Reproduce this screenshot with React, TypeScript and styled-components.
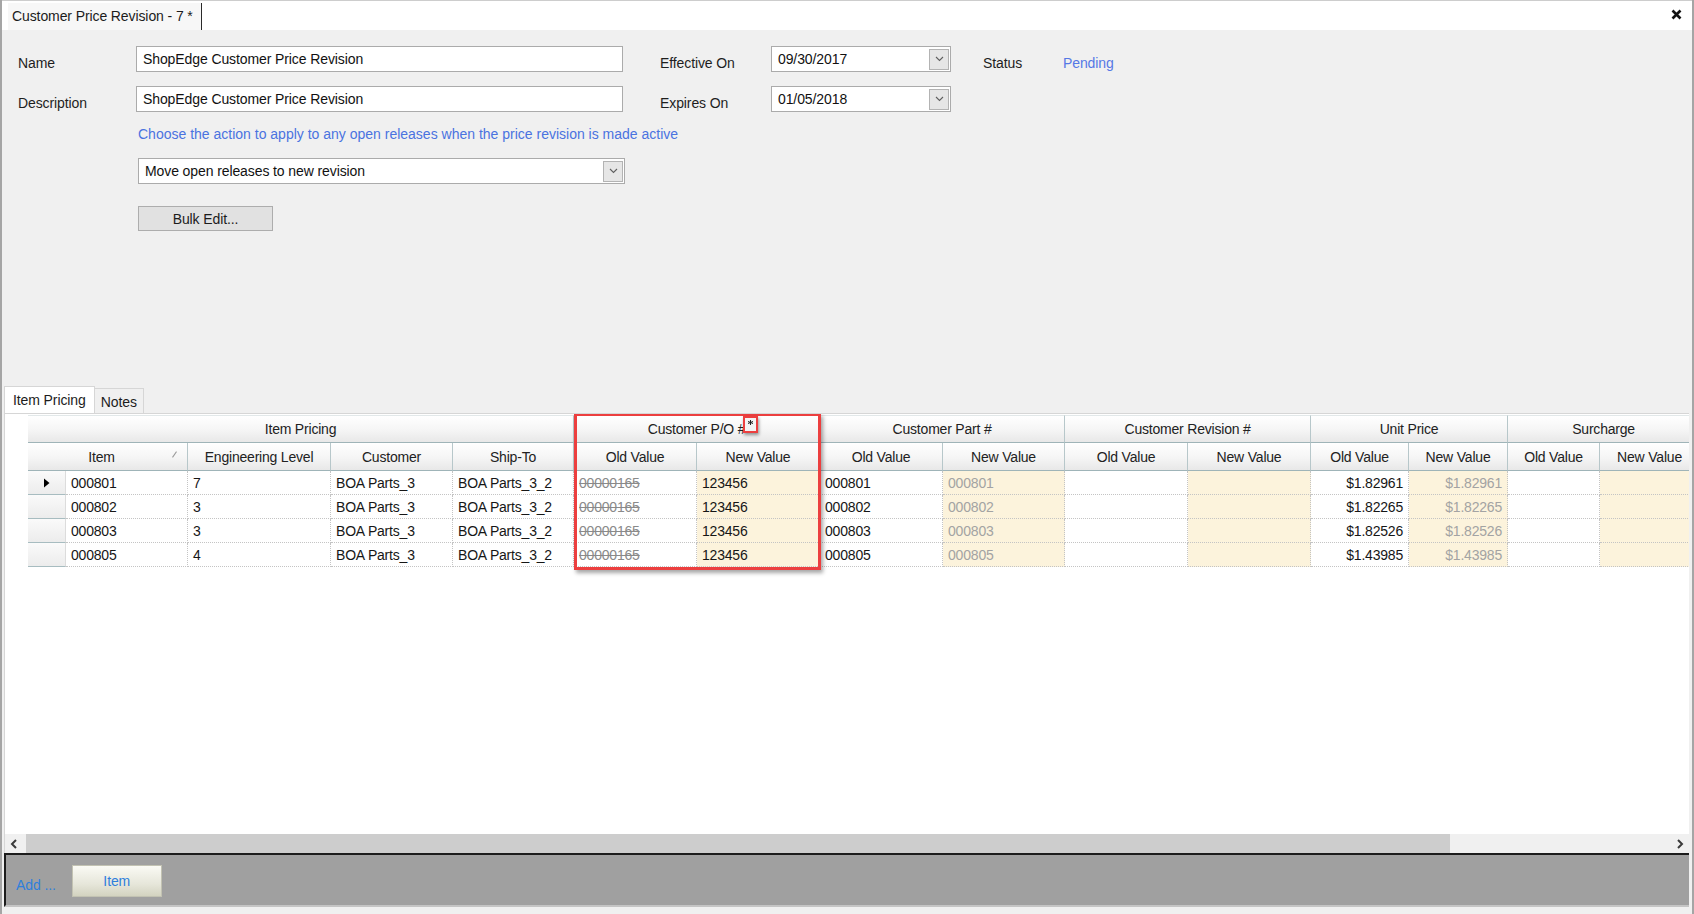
import React from 'react';
import styled, { createGlobalStyle, css } from 'styled-components';

const GlobalStyle = createGlobalStyle`
  html, body { margin: 0; padding: 0; }
  body {
    font-family: "Liberation Sans", Arial, sans-serif;
    font-size: 14px;
    color: #1c1c1c;
    background: #f0f0f0;
  }
  * { box-sizing: border-box; }
`;

const Window = styled.div`
  width: 1694px;
  height: 914px;
  display: flex;
  flex-direction: column;
  background: #f0f0f0;
  border-left: 2px solid #a5a5a5;
  border-right: 2px solid #a5a5a5;
  overflow: hidden;
`;

const TopStrip = styled.div`
  height: 30px;
  flex: none;
  display: flex;
  align-items: stretch;
  background: #fff;
  border-top: 1px solid #cdcdcd;
`;

const DocTab = styled.div`
  display: flex;
  align-items: center;
  margin: 2px 0 0 6px;
  padding: 0 8px 2px 4px;
  background: #f7f7f7;
  border-right: 1px solid #2a2a2a;
  letter-spacing: -0.1px;
`;

const CloseBtn = styled.div`
  margin-left: auto;
  width: 30px;
  display: flex;
  align-items: center;
  justify-content: center;
  padding-bottom: 2px;
  margin-right: 1px;
`;

const FormArea = styled.div`
  height: 356px;
  flex: none;
  padding: 16px 0 0 16px;
`;

const FormGrid = styled.div`
  display: grid;
  grid-template-columns: 118px 487px 148px 180px 112px auto;
  grid-auto-rows: 26px;
  row-gap: 14px;
`;

const Label = styled.div<{ $pad?: number; $blue?: boolean }>`
  padding-top: 9px;
  padding-left: ${p => p.$pad || 0}px;
  line-height: 16px;
  letter-spacing: -0.1px;
  color: ${p => (p.$blue ? '#5578e6' : '#1e1e1e')};
`;

const TextBox = styled.div`
  height: 26px;
  background: #fff;
  border: 1px solid #ababab;
  padding: 0 6px;
  display: flex;
  align-items: center;
  letter-spacing: -0.1px;
  color: #111;
`;

const ComboBox = styled(TextBox)`
  padding-right: 1px;
  justify-content: space-between;
`;

const ComboArrow = styled.div`
  width: 20px;
  height: 21px;
  background: #e6e6e6;
  border: 1px solid #b3b3b3;
  display: flex;
  align-items: center;
  justify-content: center;
`;

const Indented = styled.div`
  margin-left: 120px;
  width: 487px;
`;

const Hint = styled.div`
  margin-top: 14px;
  line-height: 16px;
  color: #4a73e0;
  white-space: nowrap;
`;

const Spaced = styled.div<{ $top: number }>`
  margin-top: ${p => p.$top}px;
`;

const PlainButton = styled.div`
  width: 135px;
  height: 25px;
  background: #e1e1e1;
  border: 1px solid #adadad;
  display: flex;
  align-items: center;
  justify-content: center;
  letter-spacing: -0.1px;
`;

const TabRow = styled.div`
  height: 27px;
  flex: none;
  display: flex;
  align-items: flex-end;
  padding-left: 2px;
`;

const Tab = styled.div<{ $active?: boolean }>`
  height: ${p => (p.$active ? 27 : 25)}px;
  padding: 0 ${p => (p.$active ? 8 : 6)}px;
  display: flex;
  align-items: center;
  letter-spacing: -0.1px;
  border: 1px solid #d6d6d6;
  border-bottom: none;
  background: ${p => (p.$active ? '#fff' : '#f0f0f0')};
  ${p => !p.$active && css`border-left: none; padding-top: 2px;`}
`;

const GridPanel = styled.div`
  height: 440px;
  flex: none;
  margin: 0 3px 0 2px;
  background: #fff;
  border-left: 1px solid #d6d6d6;
  border-top: 1px solid #d6d6d6;
  display: flex;
  flex-direction: column;
`;

const TableArea = styled.div`
  flex: 1;
  overflow: hidden;
  padding: 1px 0 0 23px;
`;

const TableWrap = styled.div`
  position: relative;
  width: 1672px;
`;

const Table = styled.table`
  border-collapse: separate;
  border-spacing: 0;
  table-layout: fixed;
  width: 1672px;
`;

const headCell = css`
  height: 28px;
  padding: 0;
  font-weight: normal;
  text-align: center;
  color: #222;
  letter-spacing: -0.2px;
  white-space: nowrap;
  background: linear-gradient(#ffffff, #f5f5f5 55%, #e8e8e8);
  border-right: 1px solid #b7c7ca;
  border-bottom: 1px solid #9fb4b8;
`;

const GroupHead = styled.th`
  ${headCell}
  border-top: 1px solid #e2e8e9;
`;

const SubHead = styled.th<{ $sort?: boolean }>`
  ${headCell}
  position: relative;
  ${p => p.$sort && css`padding-right: 12px;`}
`;

const SortMark = styled.span`
  position: absolute;
  right: 12px;
  top: 8px;
  width: 1px;
  height: 7px;
  background: #9a9a9a;
  transform: rotate(35deg);
`;

const RowHead = styled.td`
  height: 24px;
  padding: 0;
  background: linear-gradient(#fafafa, #ececec);
  border-bottom: 1px solid #a7bcc0;
  border-right: 1px solid #dcdcdc;
  text-align: center;
  vertical-align: middle;
`;

type Tone = 'plain' | 'struck' | 'muted';

const Cell = styled.td<{ $tone?: Tone; $cream?: boolean; $right?: boolean }>`
  height: 24px;
  padding: 0 5px;
  white-space: nowrap;
  overflow: hidden;
  letter-spacing: -0.2px;
  border-bottom: 1px dotted #c4c4c4;
  border-right: 1px dotted #c4c4c4;
  background: ${p => (p.$cream ? '#fcf3dc' : '#fff')};
  text-align: ${p => (p.$right ? 'right' : 'left')};
  color: ${p => (p.$tone === 'struck' ? '#8a8a8a' : p.$tone === 'muted' ? '#a3a3a3' : '#161616')};
  ${p => p.$tone === 'struck' && css`text-decoration: line-through;`}
`;

const Highlight = styled.div`
  position: absolute;
  left: 546px;
  top: -2px;
  width: 247px;
  height: 157px;
  border: 3px solid #ec3f3f;
  box-shadow: 2px 3px 4px rgba(0, 0, 0, 0.35);
  pointer-events: none;
`;

const GlyphBox = styled.div`
  position: absolute;
  left: 715px;
  top: 1px;
  width: 15px;
  height: 17px;
  border: 2px solid #ec3f3f;
  box-shadow: 1px 2px 3px rgba(0, 0, 0, 0.4);
  display: flex;
  justify-content: center;
  padding-top: 2px;
  background: #f4f4f4;
`;

const ScrollBar = styled.div`
  height: 19px;
  flex: none;
  display: flex;
  background: #f0f0f0;
`;

const ScrollArrow = styled.div`
  width: 18px;
  display: flex;
  align-items: center;
  justify-content: center;
`;

const ScrollThumb = styled.div`
  width: 1424px;
  margin-left: 3px;
  background: #cdcdcd;
`;

const ScrollGap = styled.div`
  flex: 1;
`;

const BottomBar = styled.div`
  height: 54px;
  flex: none;
  margin: 0 3px 0 2px;
  background: #a0a0a0;
  border-top: 2px solid #1c1c1c;
  border-left: 2px solid #1c1c1c;
  border-bottom: 2px solid #c4c4c4;
  display: flex;
  align-items: flex-start;
  padding: 10px 0 0 10px;
`;

const AddLabel = styled.div`
  color: #2f7fdc;
  letter-spacing: -0.1px;
  padding-top: 12px;
`;

const ItemButton = styled.div`
  margin-left: 16px;
  width: 90px;
  height: 32px;
  background: linear-gradient(#fafaf4, #e6e6da 60%, #d3d3c0);
  border: 1px solid #c2c2b2;
  color: #2f7fdc;
  display: flex;
  align-items: center;
  justify-content: center;
  letter-spacing: -0.1px;
`;

const Chevron = ({ dir = 'down' }: { dir?: 'down' | 'left' | 'right' }) => {
  if (dir === 'down')
    return (
      <svg width="9" height="6" viewBox="0 0 9 6">
        <polyline points="1,1 4.5,4.5 8,1" fill="none" stroke="#606060" strokeWidth="1.1" />
      </svg>
    );
  const pts = dir === 'left' ? '6,1 2,5 6,9' : '2,1 6,5 2,9';
  return (
    <svg width="8" height="10" viewBox="0 0 8 10">
      <polyline points={pts} fill="none" stroke="#3a3a3a" strokeWidth="2" />
    </svg>
  );
};

// last column runs past the visible edge of the grid
const columns = [122, 143, 122, 121, 123, 123, 123, 122, 123, 123, 98, 99, 92, 100];

const rows = [
  { item: '000801', eng: '7', price: '$1.82961' },
  { item: '000802', eng: '3', price: '$1.82265' },
  { item: '000803', eng: '3', price: '$1.82526' },
  { item: '000805', eng: '4', price: '$1.43985' },
];

const groups = ['Customer P/O #', 'Customer Part #', 'Customer Revision #', 'Unit Price', 'Surcharge'];

export default function App() {
  return (
    <>
      <GlobalStyle />
      <Window>
        <TopStrip>
          <DocTab>Customer Price Revision - 7 *</DocTab>
          <CloseBtn>
            <svg width="11" height="11" viewBox="0 0 11 11">
              <path d="M1.5 1.5 L9.5 9.5 M9.5 1.5 L1.5 9.5" stroke="#111" strokeWidth="2.6" />
            </svg>
          </CloseBtn>
        </TopStrip>

        <FormArea>
          <FormGrid>
            <Label>Name</Label>
            <TextBox>ShopEdge Customer Price Revision</TextBox>
            <Label $pad={37}>Effective On</Label>
            <ComboBox>
              09/30/2017
              <ComboArrow><Chevron /></ComboArrow>
            </ComboBox>
            <Label $pad={32}>Status</Label>
            <Label $blue>Pending</Label>

            <Label>Description</Label>
            <TextBox>ShopEdge Customer Price Revision</TextBox>
            <Label $pad={37}>Expires On</Label>
            <ComboBox>
              01/05/2018
              <ComboArrow><Chevron /></ComboArrow>
            </ComboBox>
          </FormGrid>

          <Indented>
            <Hint>Choose the action to apply to any open releases when the price revision is made active</Hint>
            <Spaced $top={16}>
              <ComboBox>
                Move open releases to new revision
                <ComboArrow><Chevron /></ComboArrow>
              </ComboBox>
            </Spaced>
            <Spaced $top={22}>
              <PlainButton>Bulk Edit...</PlainButton>
            </Spaced>
          </Indented>
        </FormArea>

        <TabRow>
          <Tab $active>Item Pricing</Tab>
          <Tab>Notes</Tab>
        </TabRow>

        <GridPanel>
          <TableArea>
            <TableWrap>
              <Table>
                <colgroup>
                  <col style={{ width: 38 }} />
                  {columns.map((w, i) => (
                    <col key={i} style={{ width: w }} />
                  ))}
                </colgroup>
                <thead>
                  <tr>
                    <GroupHead colSpan={5}>Item Pricing</GroupHead>
                    {groups.map(g => (
                      <GroupHead key={g} colSpan={2}>{g}</GroupHead>
                    ))}
                  </tr>
                  <tr>
                    <SubHead colSpan={2} $sort>
                      Item
                      <SortMark />
                    </SubHead>
                    <SubHead>Engineering Level</SubHead>
                    <SubHead>Customer</SubHead>
                    <SubHead>Ship-To</SubHead>
                    {groups.map(g => (
                      <React.Fragment key={g}>
                        <SubHead>Old Value</SubHead>
                        <SubHead>New Value</SubHead>
                      </React.Fragment>
                    ))}
                  </tr>
                </thead>
                <tbody>
                  {rows.map((r, i) => (
                    <tr key={r.item}>
                      <RowHead>
                        {i === 0 && (
                          <svg width="7" height="10" viewBox="0 0 7 10">
                            <path d="M1 0.5 L6.5 5 L1 9.5 Z" fill="#000" />
                          </svg>
                        )}
                      </RowHead>
                      <Cell>{r.item}</Cell>
                      <Cell>{r.eng}</Cell>
                      <Cell>BOA Parts_3</Cell>
                      <Cell>BOA Parts_3_2</Cell>
                      <Cell $tone="struck">00000165</Cell>
                      <Cell $cream>123456</Cell>
                      <Cell>{r.item}</Cell>
                      <Cell $cream $tone="muted">{r.item}</Cell>
                      <Cell />
                      <Cell $cream />
                      <Cell $right>{r.price}</Cell>
                      <Cell $cream $right $tone="muted">{r.price}</Cell>
                      <Cell />
                      <Cell $cream />
                    </tr>
                  ))}
                </tbody>
              </Table>
              <Highlight />
              <GlyphBox>
                <svg width="5" height="5" viewBox="0 0 5 5">
                  <path d="M2.5 0 V5 M0 1.5 L5 3.5 M0 3.5 L5 1.5" stroke="#222" strokeWidth="1" />
                </svg>
              </GlyphBox>
            </TableWrap>
          </TableArea>
          <ScrollBar>
            <ScrollArrow><Chevron dir="left" /></ScrollArrow>
            <ScrollThumb />
            <ScrollGap />
            <ScrollArrow><Chevron dir="right" /></ScrollArrow>
          </ScrollBar>
        </GridPanel>

        <BottomBar>
          <AddLabel>Add ...</AddLabel>
          <ItemButton>Item</ItemButton>
        </BottomBar>
      </Window>
    </>
  );
}
